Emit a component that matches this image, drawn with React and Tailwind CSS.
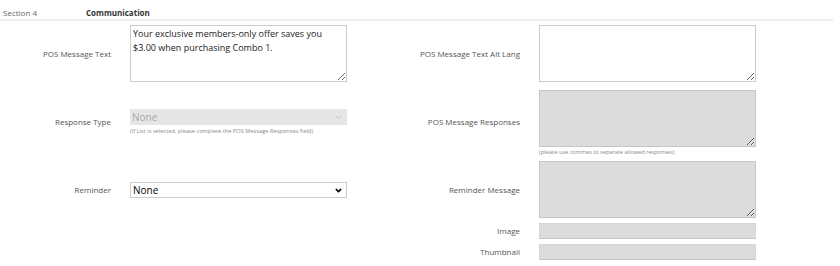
import { ChevronDown } from 'lucide-react'

const font = { fontFamily: '"Open Sans", "Noto Sans", sans-serif' }

function Label({ children }) {
  return <div className="text-right text-[8px] leading-[12px] text-[#555555]">{children}</div>
}

function Select({ disabled }) {
  return (
    <div className="relative w-[217px]">
      <select
        disabled={disabled}
        defaultValue="None"
        className={
          disabled
            ? 'block h-[16px] w-full appearance-none bg-[#e6e6e6] pl-[2px] text-[10px] leading-[14px] text-[#a8a8a8] outline-none'
            : 'block h-[16px] w-full appearance-none border border-[#cccccc] bg-white pl-[2px] text-[10px] leading-[14px] text-black outline-none'
        }
        style={font}
      >
        <option>None</option>
      </select>
      <ChevronDown
        className={
          disabled
            ? 'pointer-events-none absolute right-[4px] top-[4px] h-[9px] w-[9px] text-[#b5b5b5]'
            : 'pointer-events-none absolute right-[4px] top-[4px] h-[9px] w-[9px] text-black'
        }
        strokeWidth={disabled ? 2 : 4}
      />
    </div>
  )
}

function Area({ value, disabled }) {
  return (
    <textarea
      disabled={disabled}
      defaultValue={value}
      className={
        disabled
          ? 'block h-[57px] w-[217px] border border-[#c6c6c6] bg-[#dcdcdc] outline-none'
          : 'block h-[57px] w-[217px] border border-[#cccccc] bg-white px-[2px] py-[1px] text-[9px] leading-[14px] text-[#222222] outline-none'
      }
      style={font}
    />
  )
}

function Field() {
  return <div className="h-[16px] w-[217px] border border-[#d6d6d6] border-b-[#c4c4c4] bg-[#dcdcdc]" />
}

export default function App() {
  return (
    <div className="h-[266px] w-[840px] bg-white" style={font}>
      <div className="flex h-[21px] w-[833px] border-b-2 border-[#eeeeee] pt-[7px] text-[8px] leading-[11px]">
        <span className="w-[86px] pl-[3px] text-[#666666]">Section 4</span>
        <span className="font-bold text-[#333333]">Communication</span>
      </div>

      <div className="mt-[4px] grid grid-cols-[111px_217px_154px_217px] items-center gap-x-[19px] gap-y-[5px]">
        <Label>POS Message Text</Label>
        <Area value={'Your exclusive members-only offer saves you $3.00 when purchasing Combo 1.'} />
        <Label>POS Message Text Alt Lang</Label>
        <Area />

        <Label>Response Type</Label>
        <div>
          <Select disabled />
          <div className="mt-[2px] text-[5.7px] leading-[8px] text-[#888888]">
            (If List is selected, please complete the POS Message Responses field)
          </div>
        </div>
        <Label>POS Message Responses</Label>
        <div className="pt-[3px]">
          <Area disabled />
          <div className="mt-[1px] text-[5.6px] leading-[8px] text-[#888888]">
            (please use commas to separate allowed responses)
          </div>
        </div>

        <Label>Reminder</Label>
        <Select />
        <Label>Reminder Message</Label>
        <Area disabled />

        <div />
        <div />
        <Label>Image</Label>
        <Field />

        <div />
        <div />
        <Label>Thumbnail</Label>
        <Field />
      </div>
    </div>
  )
}
